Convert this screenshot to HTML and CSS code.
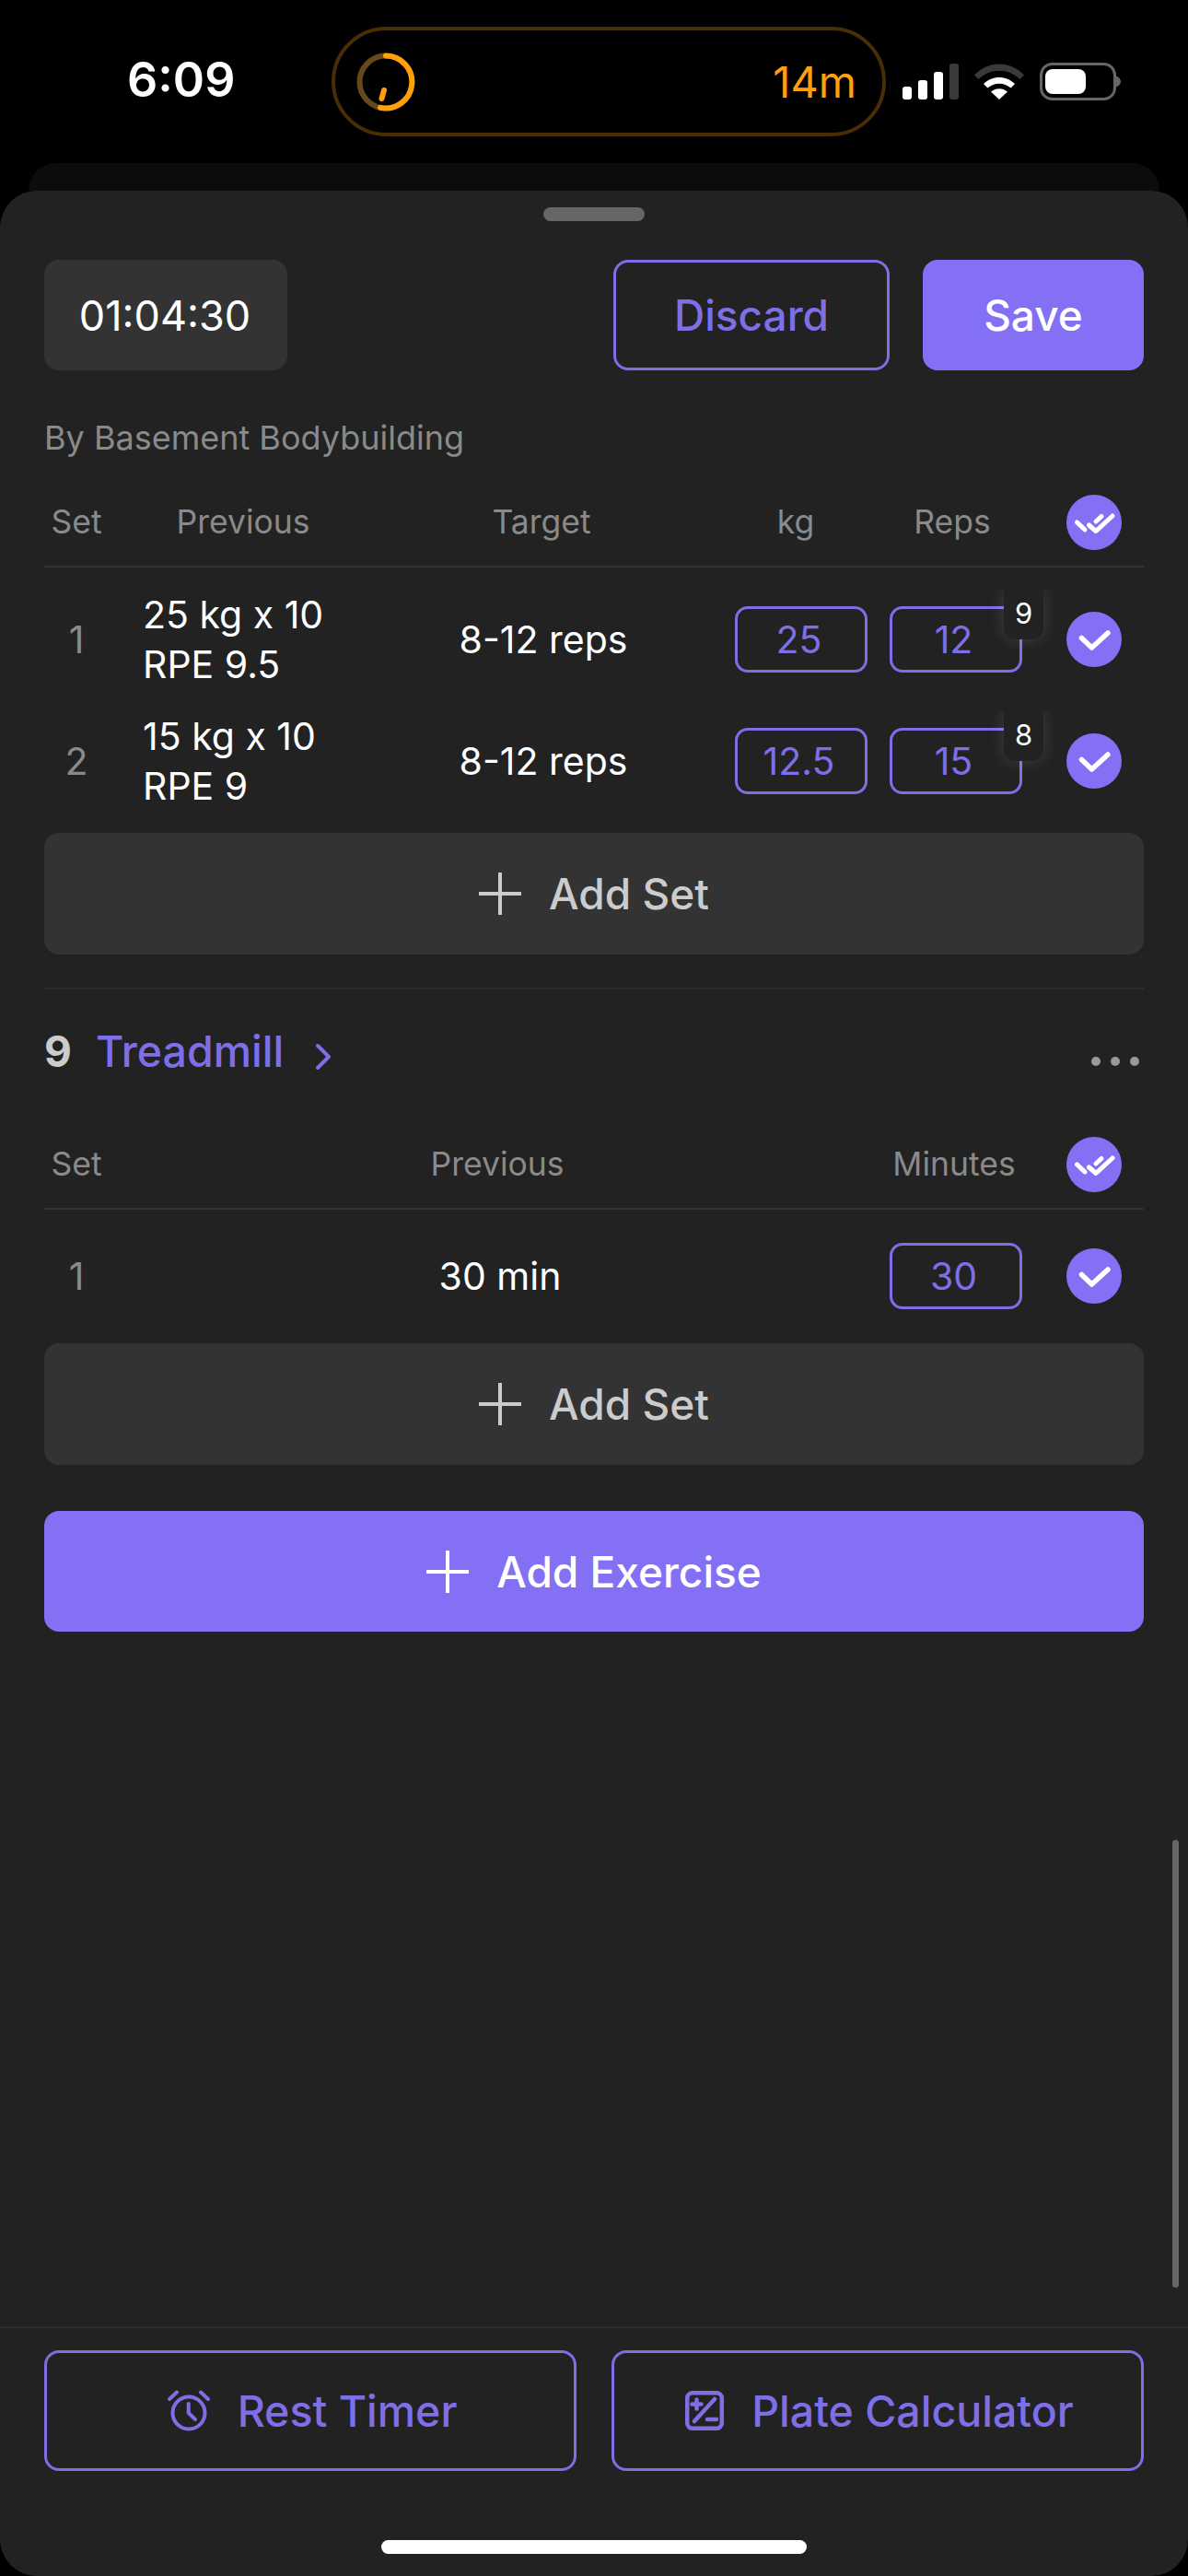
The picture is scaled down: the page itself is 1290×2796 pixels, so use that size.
FILE: index.html
```html
<!DOCTYPE html>
<html lang="en">
<head>
  <meta charset="UTF-8">
  <title>Workout</title>
  <meta name="viewport" content="width=device-width, initial-scale=1.0">
  <link rel="stylesheet" href="styles.css">
</head>
<body>

  <svg class="defs" width="0" height="0">
    <symbol id="check" viewBox="0 0 60 60">
      <circle cx="30" cy="30" r="30" fill="#8370f5"/>
      <polyline points="16.5,28.5 27.5,39 45,23" fill="none" stroke="#fff" stroke-width="5.5" stroke-linecap="round" stroke-linejoin="round"/>
    </symbol>
    <symbol id="check-all" viewBox="0 0 60 60">
      <circle cx="30" cy="30" r="30" fill="#8370f5"/>
      <g fill="none" stroke="#fff" stroke-width="5" stroke-linecap="round" stroke-linejoin="round">
        <line x1="11.5" y1="30" x2="20" y2="38"/>
        <polyline points="24.5,33 32,39.5 50,23"/>
        <line x1="32" y1="29" x2="38" y2="23.5"/>
      </g>
    </symbol>
    <symbol id="plus" viewBox="0 0 46 46">
      <path d="M23 1v44M1 23h44" fill="none" stroke="currentColor" stroke-width="4" stroke-linecap="round"/>
    </symbol>
  </svg>

  <div class="phone">
    <header class="status">
      <span class="clock">6:09</span>
      <div class="island">
        <svg class="ring" width="64" height="64" viewBox="0 0 64 64">
          <circle cx="32" cy="32" r="28.5" fill="none" stroke="#66481b" stroke-width="6"/>
          <path d="M32 3.5A28.5 28.5 0 1 1 26 59.9" fill="none" stroke="#ff9f0a" stroke-width="6" stroke-linecap="round"/>
          <line x1="30" y1="41" x2="27.5" y2="50" stroke="#ff9f0a" stroke-width="6" stroke-linecap="round"/>
        </svg>
        <span class="island-time">14m</span>
      </div>
      <div class="status-icons">
        <svg width="61" height="39" viewBox="0 0 61 39">
          <rect x="0" y="25" width="10" height="14" rx="3" fill="#fff"/>
          <rect x="17" y="18" width="10" height="21" rx="3" fill="#fff"/>
          <rect x="34" y="9" width="10" height="30" rx="3" fill="#fff"/>
          <rect x="51" y="0" width="10" height="39" rx="3" fill="#3a3a3a"/>
        </svg>
        <svg width="54" height="39" viewBox="0 0 54 39">
          <path d="M0 12.5C15 -3.5 39 -3.5 54 12.5L49.5 17C37 4.5 17 4.5 4.5 17Z" fill="#3a3a3a"/>
          <path d="M10 22C19.500 12.500 34.500 12.500 44 22L39.500 26.500C32.500 20 21.500 20 14.500 26.500Z" fill="#fff"/>
          <path d="M18 30.500C23.500 26 30.500 26 36 30.500L27 39Z" fill="#fff"/>
        </svg>
        <svg width="88" height="41" viewBox="0 0 88 41">
          <rect x="1.500" y="1.500" width="80" height="38" rx="12" fill="none" stroke="#666" stroke-width="3"/>
          <rect x="6" y="7" width="44" height="27" rx="8" fill="#fff"/>
          <path d="M83 14.500C86 15.500 88 18 88 20.500C88 23 86 25.500 83 26.500Z" fill="#666"/>
        </svg>
      </div>
    </header>

    <div class="sheet-behind"></div>

    <main class="sheet">
      <div class="scrollbar"></div>
      <div class="handle"></div>

      <div class="toolbar">
        <div class="timer">01:04:30</div>
        <button class="btn-outline discard">Discard</button>
        <button class="btn-fill save">Save</button>
      </div>

      <p class="byline">By Basement Bodybuilding</p>

      <div class="grid grid-weights head">
        <span>Set</span>
        <span>Previous</span>
        <span class="head-target">Target</span>
        <span class="head-kg">kg</span>
        <span class="head-reps">Reps</span>
        <svg class="tick"><use href="#check-all"/></svg>
      </div>

      <div class="rows">
        <div class="grid grid-weights row">
          <span class="set-no">1</span>
          <span class="prev">25 kg x 10<br>RPE 9.5</span>
          <span>8-12 reps</span>
          <div class="field">25</div>
          <div class="field">12<span class="rpe">9</span></div>
          <svg class="tick"><use href="#check"/></svg>
        </div>
        <div class="grid grid-weights row">
          <span class="set-no">2</span>
          <span class="prev">15 kg x 10<br>RPE 9</span>
          <span>8-12 reps</span>
          <div class="field">12.5</div>
          <div class="field">15<span class="rpe">8</span></div>
          <svg class="tick"><use href="#check"/></svg>
        </div>
      </div>

      <button class="add-set"><svg class="plus"><use href="#plus"/></svg>Add Set</button>

      <hr class="rule">

      <div class="exercise">
        <span class="ex-no">9</span>
        <span class="ex-name">Treadmill</span>
        <svg class="chevron" width="18" height="30" viewBox="0 0 18 30">
          <polyline points="3,3 15,15 3,27" fill="none" stroke="#7f6fe6" stroke-width="4" stroke-linecap="round" stroke-linejoin="round"/>
        </svg>
        <div class="dots"><i></i><i></i><i></i></div>
      </div>

      <div class="grid grid-cardio head">
        <span>Set</span>
        <span>Previous</span>
        <span>Minutes</span>
        <svg class="tick"><use href="#check-all"/></svg>
      </div>

      <div class="grid grid-cardio row row-cardio">
        <span class="set-no">1</span>
        <span class="cardio-prev">30 min</span>
        <div class="field">30</div>
        <svg class="tick"><use href="#check"/></svg>
      </div>

      <button class="add-set add-set-cardio"><svg class="plus"><use href="#plus"/></svg>Add Set</button>

      <button class="add-exercise"><svg class="plus"><use href="#plus"/></svg>Add Exercise</button>

      <footer class="footer">
        <div class="footer-btns">
          <button class="btn-outline tool">
            <svg width="46" height="45" viewBox="0 0 46 45" fill="none" stroke="#7f6fe6" stroke-width="4" stroke-linecap="round" stroke-linejoin="round">
              <circle cx="23" cy="25" r="17.500"/>
              <polyline points="22.700,15 22.700,25 30,32"/>
              <line x1="2" y1="10" x2="10" y2="2.500"/>
              <line x1="36" y1="2.500" x2="44" y2="10"/>
            </svg>
            Rest Timer
          </button>
          <button class="btn-outline tool">
            <svg width="42" height="43" viewBox="0 0 42 43" fill="none" stroke="#7f6fe6" stroke-width="4.500" stroke-linecap="round">
              <rect x="2.200" y="2.200" width="37.600" height="38.600" rx="6"/>
              <line x1="10" y1="33" x2="32" y2="9"/>
              <path d="M12.500 9.500v10M7.500 14.500h10M24 31h10"/>
            </svg>
            Plate Calculator
          </button>
        </div>
        <div class="home-bar"></div>
      </footer>
    </main>
  </div>

</body>
</html>
```

FILE: styles.css
```css
* { box-sizing: border-box; }

body {
  margin: 0;
  background: #000;
  color: #fff;
  font-family: Inter, "Noto Sans", sans-serif;
}
.defs { position: absolute; }

button {
  font-family: inherit;
  cursor: pointer;
  padding: 0;
}

.phone {
  width: 1290px;
  height: 2796px;
  display: flex;
  flex-direction: column;
  overflow: hidden;
  background: #000;
}

/* status bar */
.status {
  height: 177px;
  padding: 29px 0 29px 138px;
  display: flex;
  align-items: center;
}
.clock {
  width: 116px;
  padding-bottom: 4px;
  font-size: 52px;
  font-weight: 600;
  white-space: nowrap;
}
.island {
  width: 602px;
  height: 119px;
  margin-left: 106px;
  padding: 0 28px 0 23px;
  border: 4px solid #4a2c05;
  border-radius: 60px;
  display: flex;
  align-items: center;
  justify-content: space-between;
}
.island-time {
  font-size: 47px;
  font-weight: 400;
  color: #ff9f0a;
}
.status-icons {
  margin-left: 18px;
  display: flex;
  align-items: center;
  gap: 17px;
}

.sheet-behind {
  height: 30px;
  margin: 0 31px;
  background: #0c0c0c;
  border-radius: 36px 36px 0 0;
}

.sheet {
  position: relative;
  flex: 1;
  display: flex;
  flex-direction: column;
  padding: 18px 48px 0;
  background: #222;
  border-radius: 40px;
}
.scrollbar {
  position: absolute;
  right: 10px;
  top: 1790px;
  width: 7px;
  height: 486px;
  border-radius: 4px;
  background: #666;
}
.handle {
  width: 110px;
  height: 15px;
  margin: 0 auto;
  border-radius: 8px;
  background: #666;
}

/* top buttons */
.toolbar {
  height: 120px;
  margin-top: 42px;
  display: flex;
  flex: none;
}
.timer {
  width: 264px;
  padding-right: 2px;
  display: flex;
  align-items: center;
  justify-content: center;
  background: #333;
  border-radius: 16px;
  font-size: 45px;
}
.btn-outline {
  background: transparent;
  border: 3px solid #7f6fe6;
  border-radius: 16px;
  color: #7f6fe6;
  font-weight: 500;
}
.btn-fill {
  background: #8370f5;
  border: 0;
  border-radius: 16px;
  color: #fff;
  font-weight: 500;
}
.discard {
  width: 300px;
  margin-left: auto;
  font-size: 46px;
}
.save {
  width: 240px;
  margin-left: 36px;
  font-size: 46px;
}

.byline {
  margin: 51px 0 22px;
  height: 44px;
  line-height: 44px;
  font-size: 36px;
  color: #8a8a8a;
}

/* set tables */
.grid {
  display: grid;
  align-items: center;
  text-align: center;
  flex: none;
}
.grid-weights { grid-template-columns: 70px 292px 360px 172px 168px 108px; }
.grid-cardio { grid-template-columns: 70px 844px 148px 108px; }
.head {
  height: 97px;
  border-bottom: 2px solid #333;
  font-size: 35.5px;
  color: #8a8a8a;
}
.head-target { padding-right: 4px; }
.head-kg { padding-left: 16px; }
.head-reps { padding-left: 16px; }
.tick {
  width: 60px;
  height: 60px;
  justify-self: end;
}

.rows { padding-top: 12px; flex: none; }
.row {
  height: 132px;
  font-size: 41px;
}
.set-no { color: #8a8a8a; }
.prev {
  padding-left: 37px;
  text-align: left;
  line-height: 54px;
}
.field {
  position: relative;
  width: 144px;
  height: 72px;
  padding-right: 5px;
  justify-self: end;
  display: flex;
  align-items: center;
  justify-content: center;
  border: 3px solid #7f6fe6;
  border-radius: 14px;
  color: #7f6fe6;
}
.rpe {
  position: absolute;
  top: -21px;
  right: -26px;
  width: 43px;
  height: 54px;
  padding-bottom: 4px;
  display: flex;
  align-items: center;
  justify-content: center;
  background: #222;
  border-radius: 0 0 12px 12px;
  box-shadow: 0 0 18px rgba(255, 255, 255, 0.14);
  clip-path: inset(0 -30px -30px -30px);
  color: #fff;
  font-size: 31px;
}

.add-set,
.add-exercise {
  width: 100%;
  height: 132px;
  flex: none;
  display: flex;
  align-items: center;
  justify-content: center;
  gap: 30px;
  border: 0;
  border-radius: 16px;
  font-size: 46px;
  font-weight: 500;
}
.add-set {
  margin-top: 12px;
  background: #333;
  color: #ccc;
}
.add-set-cardio { margin-top: 7px; }
.add-exercise {
  height: 131px;
  margin-top: 50px;
  background: #8370f5;
  color: #fff;
}
.plus {
  width: 46px;
  height: 46px;
}

.rule {
  width: 100%;
  margin: 36px 0 0;
  border: 0;
  border-top: 2px solid #2d2d2d;
  flex: none;
}

/* exercise title */
.exercise {
  height: 142px;
  padding-bottom: 9px;
  display: flex;
  align-items: center;
  flex: none;
}
.ex-no {
  width: 56px;
  font-size: 46px;
  font-weight: 700;
  color: #ccc;
}
.ex-name {
  font-size: 46.5px;
  font-weight: 500;
  color: #7f6fe6;
}
.chevron {
  margin: 12px 0 0 34px;
}
.dots {
  margin: 22px 5px 0 auto;
  display: flex;
  gap: 11px;
}
.dots i {
  width: 10px;
  height: 10px;
  border-radius: 50%;
  background: #999;
}

.row-cardio { margin-top: 6px; }
.cardio-prev { padding-left: 6px; }

/* bottom tools */
.footer {
  margin: auto -48px 0;
  padding-top: 24px;
  border-top: 2px solid #2d2d2d;
}
.footer-btns {
  padding: 0 48px;
  display: flex;
  justify-content: space-between;
}
.tool {
  width: 578px;
  height: 131px;
  padding-left: 4px;
  display: flex;
  align-items: center;
  justify-content: center;
  gap: 30px;
  font-size: 46.5px;
}
.home-bar {
  width: 462px;
  height: 15px;
  margin: 75px auto 24px;
  border-radius: 8px;
  background: #fff;
}
```
